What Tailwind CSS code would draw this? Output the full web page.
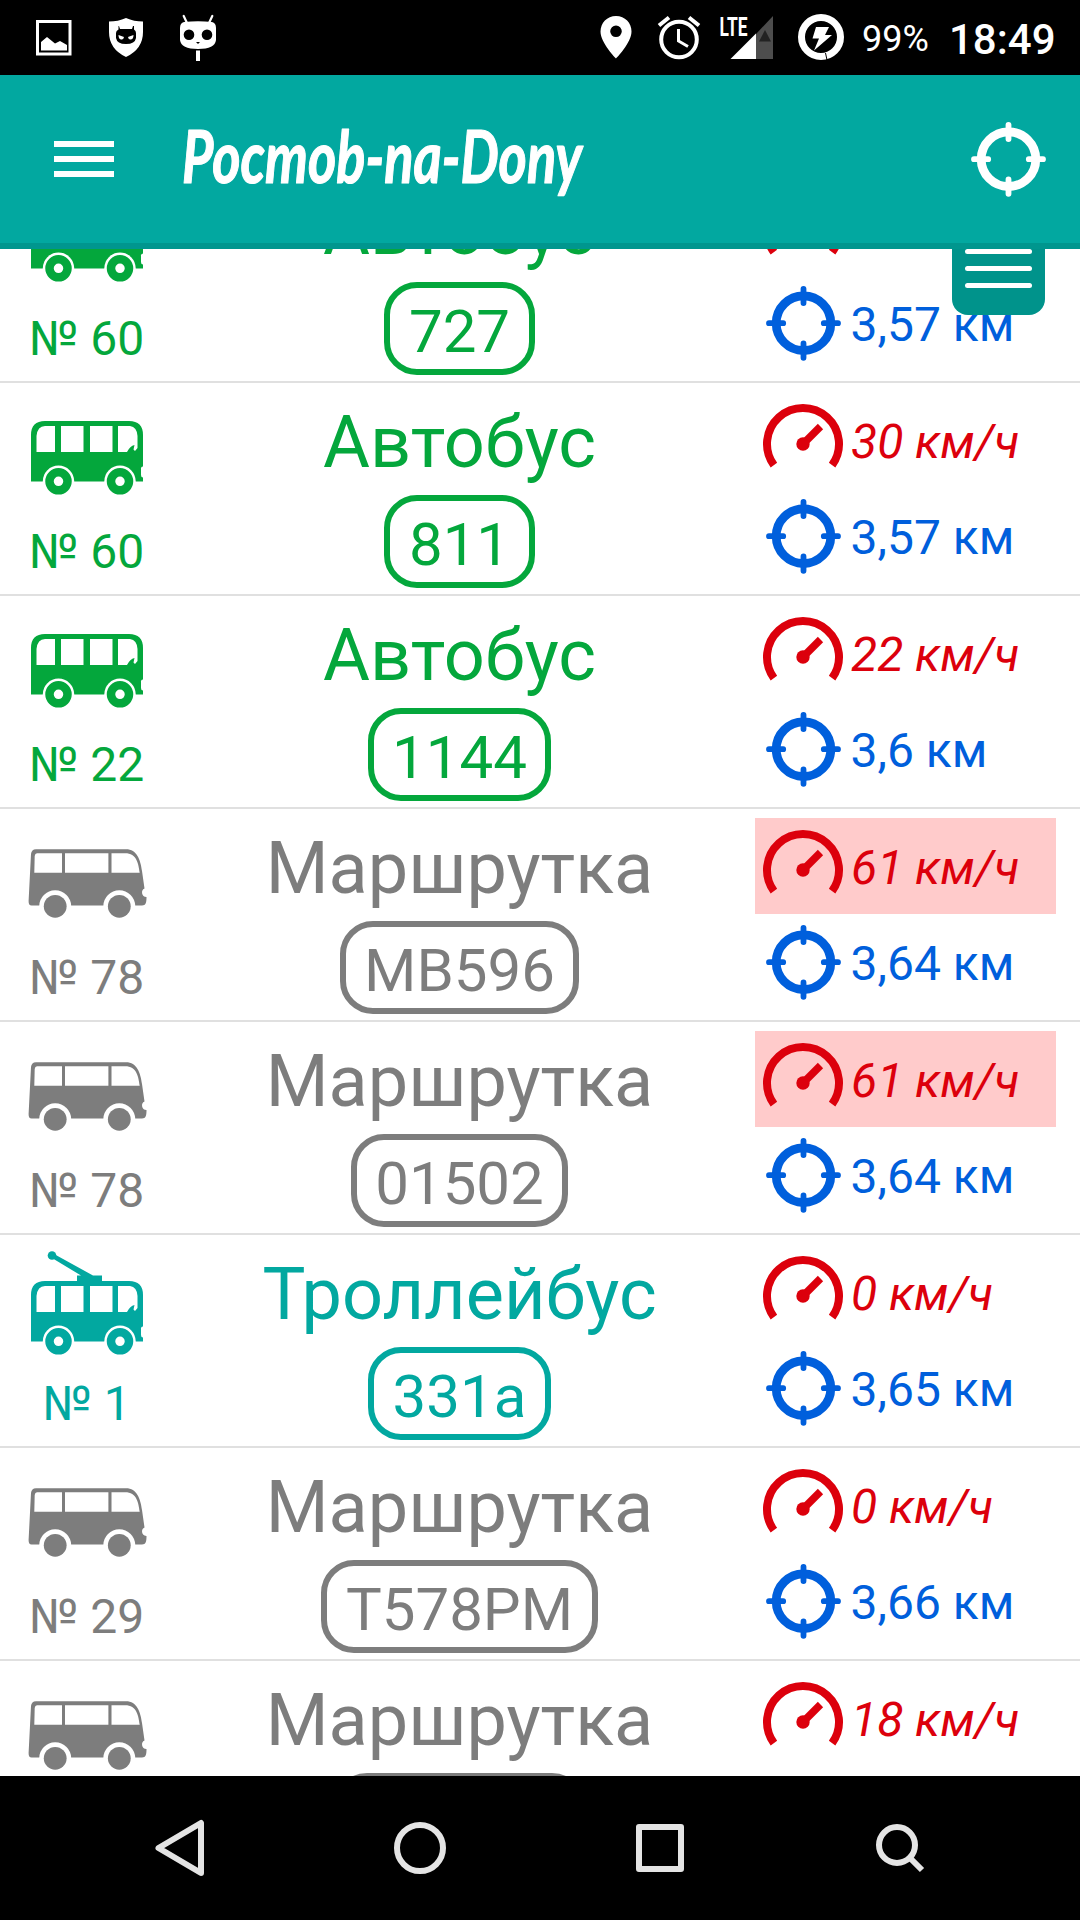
<!DOCTYPE html>
<html lang="ru">
<head>
<meta charset="utf-8">
<title>Ростов-на-Дону</title>
<script src="https://cdn.jsdelivr.net/npm/@tailwindcss/browser@4"></script>
</head>
<body class="w-[1080px] h-[1920px] overflow-hidden bg-white font-['Roboto',sans-serif]">
<svg class="hidden">
  <defs>
    <symbol id="bus" viewBox="0 0 174 140">
      <path fill="currentColor" fill-rule="evenodd" d="M31 98.5V52Q31 38 45 38H129Q143 38 143 52V83.500Q140.500 84 141 86V92Q141 94.500 143 94.500V98.500ZM36.500 69V53Q37.500 43 45 43H55V69ZM61 43H83.500V69H61ZM90 43H112.500V69H90ZM118 43H130Q137 44 137.500 53V65L135 68L133.500 66.500L134.500 62Q130 63 127 69H118Z"/>
      <circle cx="58.500" cy="98.300" r="15.700" fill="#fff"/><circle cx="120" cy="98.300" r="15.700" fill="#fff"/>
      <circle cx="58.500" cy="98.300" r="9" fill="none" stroke="currentColor" stroke-width="8.500"/>
      <circle cx="120" cy="98.300" r="9" fill="none" stroke="currentColor" stroke-width="8.500"/>
    </symbol>
    <symbol id="trolley" viewBox="0 0 174 140">
      <use href="#bus" x="0" y="8" width="174" height="140"/>
      <circle cx="52" cy="20.500" r="4.300" fill="currentColor"/>
      <path fill="currentColor" d="M54 19L93 40.500H102V47H77V40.500H81L52 23Z"/>
    </symbol>
    <symbol id="van" viewBox="0 0 174 140">
      <path fill="currentColor" fill-rule="evenodd" d="M31 45Q31.500 40.300 36 40.300H126C137 40.300 140.500 51 142 62L144.500 79.500C140.500 81 141.500 88 146.500 88C146.500 93 146 96.500 142 96.500H31.500Q28.500 96.500 28.600 92ZM34.300 63.700L34.700 47Q35 44.300 37 44.300H62V63.700ZM65 44.300H108.400V63.700H65ZM111.500 44.300H125C137 44.300 138.500 55 139.700 63.700H111.500Z"/>
      <circle cx="55.200" cy="97.300" r="16" fill="#fff"/><circle cx="119.300" cy="97.300" r="16" fill="#fff"/>
      <circle cx="55.200" cy="97.300" r="11.400" fill="currentColor"/><circle cx="119.300" cy="97.300" r="11.400" fill="currentColor"/>
    </symbol>
    <symbol id="gauge" viewBox="0 0 96 96">
      <path fill="none" stroke="currentColor" stroke-width="8" d="M18.900 73.200A36 36 0 1 1 77.100 73.200"/>
      <circle cx="48" cy="52" r="6.700" fill="currentColor"/>
      <path stroke="currentColor" stroke-width="7.500" d="M48 52L65.500 34.500"/>
    </symbol>
    <symbol id="target" viewBox="0 0 96 96">
      <circle cx="48.500" cy="48.200" r="27.300" fill="none" stroke="currentColor" stroke-width="8.800"/>
      <path stroke="currentColor" stroke-width="5.800" stroke-linecap="round" d="M48.500 13.800V28M48.500 68.400V82.800M14 48.200H28.200M68.800 48.200H83"/>
    </symbol>
  </defs>
</svg>

<div class="flex h-full flex-col">
  <!-- status bar -->
  <div class="flex h-[75px] shrink-0 justify-between bg-black text-white">
    <svg class="h-[75px] w-[240px]" viewBox="0 0 240 75" fill="#fff">
      <rect x="37.500" y="21.500" width="32.500" height="32.500" fill="none" stroke="#fff" stroke-width="3"/>
      <path d="M41 50.500V42L47 37L55 43.500L60 41L67 45V50.500Z"/>
      <path d="M126 18Q134 21.500 143 21.500V32Q143 49 126 57Q109 49 109 32V21.500Q118 21.500 126 18Z"/>
      <path fill="#000" d="M119 26L120 29H132L133 26H134V29.500Q136 30.500 136 33V38Q135 44 126 44Q117 44 116 38V33Q116 30.500 118.500 29.500V26Z"/>
      <path d="M118.500 35L124 37Q123.500 40 121 39.500Q118.500 39 118.500 35ZM133.500 35L128 37Q128.500 40 131 39.500Q133.500 39 133.500 35Z"/>
      <path d="M184 22Q198 20.500 212 22Q216 23 216 28V40Q215 49 198 49Q181 49 180 40V28Q180 23 184 22Z"/>
      <circle cx="189" cy="34.700" r="5.300" fill="#000"/><circle cx="207" cy="34.700" r="5.300" fill="#000"/>
      <path fill="#000" d="M196 42H200L198 44Z"/>
      <path d="M183.700 16L187 23M212.300 16L209 23" stroke="#fff" stroke-width="2.200" stroke-linecap="round"/>
      <rect x="196" y="50.500" width="4" height="10.500"/>
    </svg>
    <div class="flex">
      <svg class="h-[75px] w-[270px]" viewBox="590 0 270 75" fill="#fff">
        <path fill-rule="evenodd" d="M616 16C607 16 600.500 23 600.500 31.500C600.500 43 616 58.500 616 58.500S631.500 43 631.500 31.500C631.500 23 625 16 616 16ZM616 25.500A5.800 5.800 0 1 1 616 37.100A5.800 5.800 0 1 1 616 25.500Z"/>
        <circle cx="679" cy="39.500" r="17.800" fill="none" stroke="#fff" stroke-width="4"/>
        <path d="M659 25.500L669 17.500M699 25.500L689 17.500" stroke="#fff" stroke-width="4"/>
        <path d="M678.500 29V41L688 46.500" fill="none" stroke="#fff" stroke-width="3"/>
        <text x="719.500" y="35.500" textLength="28" lengthAdjust="spacingAndGlyphs" class="text-[25px] font-bold">LTE</text>
        <path fill="#4d4d4d" d="M756 34L773 16V59H756Z"/>
        <path d="M730.500 59L756 33.500V59Z"/>
        <path fill="#222" d="M765 30L771 41.500H759Z"/>
        <circle cx="821" cy="37" r="19.500" fill="none" stroke="#fff" stroke-width="7"/>
        <path d="M825.500 53L827 60" stroke="#000" stroke-width="1"/>
        <path d="M816 27H829L825 35H832L814 50.500L819 38.500H812.500Z"/>
      </svg>
      <span class="w-[89px] pl-[2px] text-[36px] leading-[79px]">99%</span>
      <span class="w-[131px] text-[42px] font-medium leading-[79px]">18:49</span>
    </div>
  </div>

  <!-- app bar -->
  <header class="z-10 flex h-[174px] shrink-0 items-center border-b-[6px] border-[#00968e] bg-[#02a8a0] pl-[54px] pr-[24px] text-white">
    <div class="flex w-[60px] flex-col gap-[9px]">
      <div class="h-[6px] bg-white"></div><div class="h-[6px] bg-white"></div><div class="h-[6px] bg-white"></div>
    </div>
    <svg class="ml-[66px] h-[168px] w-[420px]" viewBox="180 75 420 168"><text x="182" y="183" textLength="400" lengthAdjust="spacingAndGlyphs" fill="#fff" stroke="#fff" stroke-width="1.200" stroke-linejoin="round" class="font-['Lato',cursive] text-[72px] font-bold italic">Pocmob-na-Dony</text></svg>
    <svg class="ml-auto h-[96px] w-[96px]"><use href="#target"/></svg>
  </header>

  <!-- vehicle list -->
  <main class="relative min-h-0 flex-1 overflow-hidden">
    <div id="list" class="-mt-[79px] flex flex-col"></div>
    <div class="absolute -top-1 left-[951.500px] flex h-[70px] w-[93px] flex-col gap-[12px] rounded-b-[16px] bg-[#00938b] pl-[13.500px] pt-[4px]">
      <div class="h-[5px] w-[67px] rounded-full bg-white"></div>
      <div class="h-[5px] w-[67px] rounded-full bg-white"></div>
      <div class="h-[5px] w-[67px] rounded-full bg-white"></div>
    </div>
  </main>

  <!-- navigation bar -->
  <nav class="flex h-[144px] shrink-0 justify-center gap-[144px] bg-black">
    <svg class="h-[144px] w-[96px]" viewBox="132 1776 96 144" fill="none" stroke="#e4e4e4" stroke-width="6" stroke-linejoin="round"><path d="M201 1823V1873L158.500 1848Z"/></svg>
    <svg class="h-[144px] w-[96px]" viewBox="372 1776 96 144" fill="none" stroke="#e4e4e4" stroke-width="6"><circle cx="420" cy="1848" r="23"/></svg>
    <svg class="h-[144px] w-[96px]" viewBox="612 1776 96 144" fill="none" stroke="#e4e4e4" stroke-width="6" stroke-linejoin="round"><rect x="639" y="1827" width="42" height="42"/></svg>
    <svg class="h-[144px] w-[96px]" viewBox="852 1776 96 144" fill="none" stroke="#e4e4e4" stroke-width="6"><circle cx="897" cy="1845" r="18"/><path d="M909 1857L922 1870"/></svg>
  </nav>
</div>

<script>
const kinds = {
  bus: { name: 'Автобус', color: 'text-[#04a73c]' },
  van: { name: 'Маршрутка', color: 'text-[#7d7d7d]' },
  trolley: { name: 'Троллейбус', color: 'text-[#02a8a0]' },
};
const rows = [
  ['bus', '60', '727', '30', '3,57'],
  ['bus', '60', '811', '30', '3,57'],
  ['bus', '22', '1144', '22', '3,6'],
  ['van', '78', 'MB596', '61', '3,64'],
  ['van', '78', '01502', '61', '3,64'],
  ['trolley', '1', '331a', '0', '3,65'],
  ['van', '29', 'T578PM', '0', '3,66'],
  ['van', '29', '001502', '18', '3,67'],
];
document.getElementById('list').innerHTML = rows.map(([kind, route, plate, speed, dist]) => `
  <div class="flex h-[213px] shrink-0 border-b-2 border-[#e0e0e0] ${kinds[kind].color}">
    <div class="flex w-[174px] flex-col">
      <svg class="h-[140px] w-[174px]"><use href="#${kind}"/></svg>
      <div class="pr-[1px] text-center text-[48px] leading-[57px] whitespace-nowrap">№ ${route}</div>
    </div>
    <div class="flex w-[571px] flex-col items-center pt-[9px]">
      <div class="text-[72px] leading-[101px]">${kinds[kind].name}</div>
      <div class="mt-[2px] h-[93px] rounded-[33px] border-6 border-current px-[18.500px] pt-[6px] text-[60px] leading-[75px]">${plate}</div>
    </div>
    <div class="ml-[10px] flex w-[301px] flex-col pt-[9px]">
      <div class="flex h-[96px] text-[#dc000c] ${speed > 60 ? 'bg-[#ffcbcb]' : ''}">
        <svg class="h-[96px] w-[96px]"><use href="#gauge"/></svg>
        <span class="pt-[3px] text-[48px] italic leading-[93px]">${speed} км/ч</span>
      </div>
      <div class="flex h-[96px] text-[#005fdc]">
        <svg class="h-[96px] w-[96px]"><use href="#target"/></svg>
        <span class="-ml-[0.500px] pt-[3px] text-[48px] leading-[93px]">${dist} км</span>
      </div>
    </div>
  </div>`).join('');
</script>
</body>
</html>
